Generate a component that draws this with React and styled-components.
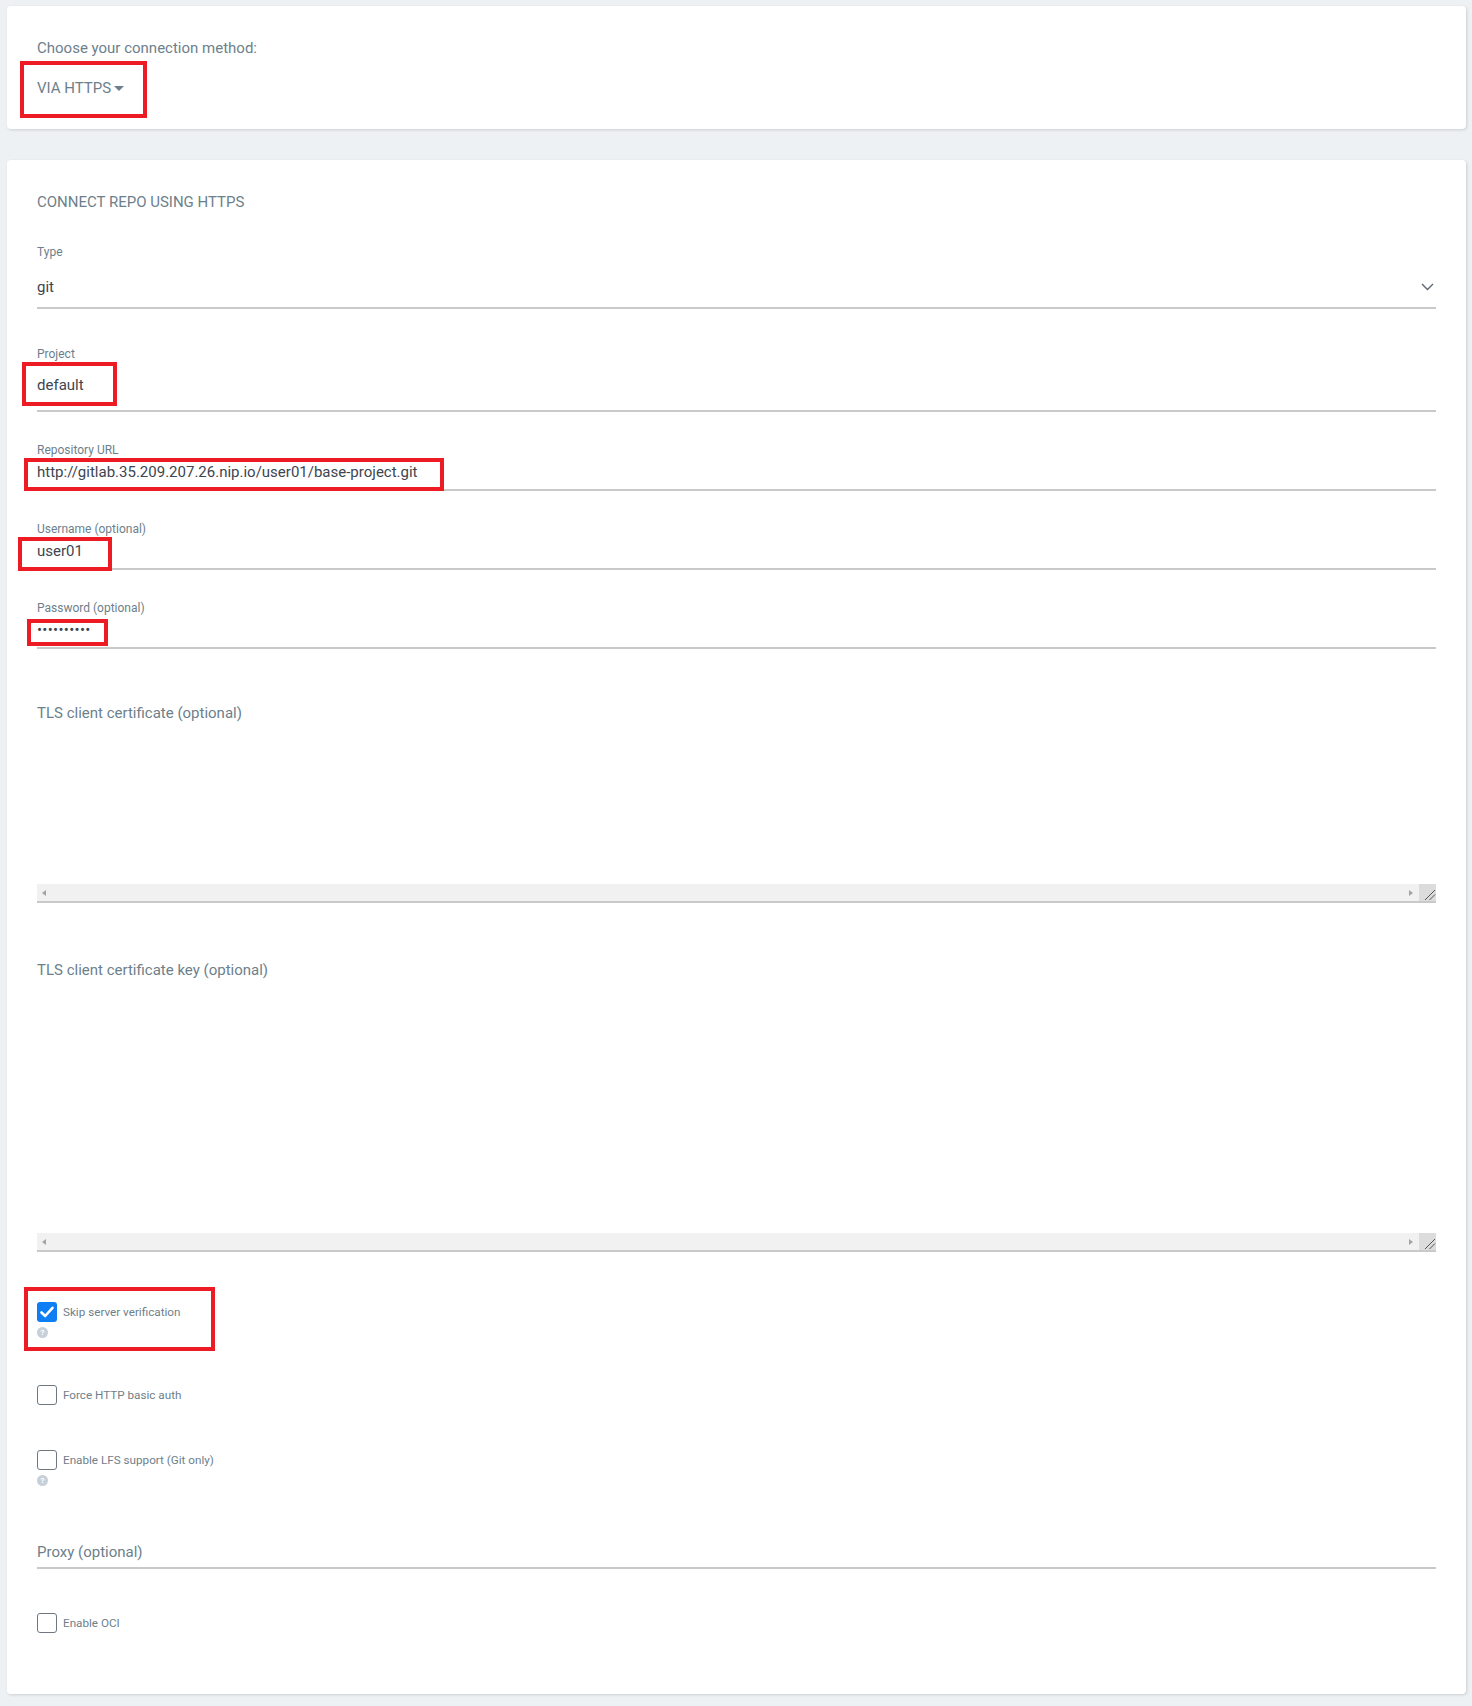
import React from "react";
import styled, { createGlobalStyle } from "styled-components";

const Global = createGlobalStyle`
  html, body { margin: 0; padding: 0; }
  body {
    background: #eef1f4;
    font-family: Roboto, "Liberation Sans", Arial, sans-serif;
    -webkit-font-smoothing: antialiased;
  }
`;

const Page = styled.div`
  padding: 6px 6px 12px 7px;
  display: flex;
  flex-direction: column;
  gap: 31px;
`;

const Card = styled.section`
  background: #fff;
  border-radius: 4px;
  box-shadow: 1px 1px 3px rgba(0, 0, 0, 0.14);
  padding: ${(p) => p.$pad};
  display: flex;
  flex-direction: column;
`;

const Muted = styled.div`
  font-size: 15px;
  line-height: 20px;
  color: #6d7f8b;
  margin-top: ${(p) => p.$mt || 0}px;
`;

const Heading = styled.h2`
  margin: 0;
  font-size: 15px;
  font-weight: 400;
  line-height: 20px;
  color: #6d7f8b;
  text-transform: uppercase;
`;

const Dropdown = styled.div`
  position: relative;
  align-self: flex-start;
  display: flex;
  align-items: center;
  gap: 3px;
  margin-top: 20px;
  font-size: 15px;
  line-height: 20px;
  color: #6d7f8b;
`;

const Caret = styled.span`
  width: 0;
  height: 0;
  border-left: 5px solid transparent;
  border-right: 5px solid transparent;
  border-top: 5px solid #6d7f8b;
  margin-top: 1px;
`;

const Highlight = styled.span`
  position: absolute;
  left: ${(p) => p.$l}px;
  top: ${(p) => p.$t}px;
  width: ${(p) => p.$w}px;
  height: ${(p) => p.$h}px;
  border: 4px solid #ed1c24;
  box-sizing: border-box;
  pointer-events: none;
`;

const Field = styled.div`
  position: relative;
  display: flex;
  flex-direction: column;
  margin-top: ${(p) => p.$mt}px;
  padding-bottom: ${(p) => p.$pb}px;
  border-bottom: 2px solid #c9c9c9;
`;

const FieldLabel = styled.label`
  font-size: 12px;
  line-height: 14px;
  color: #6d7f8b;
`;

const Value = styled.div`
  position: relative;
  display: flex;
  align-items: center;
  justify-content: space-between;
  margin-top: ${(p) => p.$mt}px;
  font-size: 15px;
  line-height: 20px;
  color: #3d4550;
  letter-spacing: ${(p) => (p.$dots ? "0.3px" : "0")};
`;

const Placeholder = styled.div`
  font-size: 15px;
  line-height: 20px;
  color: #6d7f8b;
`;

const TextArea = styled.div`
  display: flex;
  flex-direction: column;
  margin-top: ${(p) => p.$mt}px;
  border-bottom: 2px solid #c9c9c9;
`;

const AreaBody = styled.div`
  height: ${(p) => p.$h}px;
`;

const ScrollBar = styled.div`
  display: flex;
  align-items: center;
  height: 17px;
  background: #f1f1f1;
`;

const ArrowL = styled.span`
  width: 0;
  height: 0;
  margin-left: 5px;
  border-top: 3.5px solid transparent;
  border-bottom: 3.5px solid transparent;
  border-right: 4px solid #a3a3a3;
`;

const ArrowR = styled.span`
  width: 0;
  height: 0;
  margin-left: auto;
  margin-right: 6px;
  border-top: 3.5px solid transparent;
  border-bottom: 3.5px solid transparent;
  border-left: 4px solid #a3a3a3;
`;

const Resizer = styled.span`
  width: 17px;
  height: 17px;
  background: #dcdcdc;
  display: flex;
`;

const CheckRow = styled.div`
  position: relative;
  display: flex;
  flex-direction: column;
  align-items: flex-start;
  margin-top: ${(p) => p.$mt}px;
`;

const CheckLine = styled.label`
  display: flex;
  align-items: center;
  gap: 6px;
  font-size: 11.7px;
  line-height: 20px;
  color: #6d7f8b;
`;

const Box = styled.span`
  width: 20px;
  height: 20px;
  box-sizing: border-box;
  border-radius: 3px;
  border: ${(p) => (p.$on ? "none" : "1.5px solid #6f7780")};
  background: ${(p) => (p.$on ? "#0d7ef3" : "#fff")};
  display: flex;
  align-items: center;
  justify-content: center;
`;

const Help = styled.span`
  width: 11px;
  height: 11px;
  margin-top: 5px;
  border-radius: 50%;
  background: #c7d0d8;
  color: #fff;
  font-size: 8px;
  line-height: 11px;
  font-weight: 700;
  text-align: center;
`;

const ProxyField = styled.div`
  margin-top: ${(p) => p.$mt}px;
  padding-bottom: 5px;
  border-bottom: 2px solid #c9c9c9;
`;

function Checkbox({ on, label, help, mt, children }) {
  return (
    <CheckRow $mt={mt}>
      <CheckLine>
        <Box $on={on}>
          {on && (
            <svg width="14" height="12" viewBox="0 0 14 12">
              <path d="M1.5 6.5 L5.2 10 L12.5 1.8" fill="none" stroke="#fff" strokeWidth="2.6" strokeLinecap="round" strokeLinejoin="round" />
            </svg>
          )}
        </Box>
        {label}
      </CheckLine>
      {help && <Help>?</Help>}
      {children}
    </CheckRow>
  );
}

function Scroll() {
  return (
    <ScrollBar>
      <ArrowL />
      <ArrowR />
      <Resizer>
        <svg width="17" height="17" viewBox="0 0 17 17">
          <path d="M6 16 L16 6 M10.5 16 L16 10.5" stroke="#555" strokeWidth="1" />
        </svg>
      </Resizer>
    </ScrollBar>
  );
}

export default function App() {
  return (
    <>
      <Global />
      <Page>
        <Card $pad="32px 30px 31px 30px">
          <Muted>Choose your connection method:</Muted>
          <Dropdown>
            VIA HTTPS <Caret />
            <Highlight $l={-17} $t={-17} $w={127} $h={57} />
          </Dropdown>
        </Card>

        <Card $pad="32px 30px 61px 30px">
          <Heading>Connect repo using HTTPS</Heading>

          <Field $mt={33} $pb={10}>
            <FieldLabel>Type</FieldLabel>
            <Value $mt={18}>
              git
              <svg width="13" height="8" viewBox="0 0 13 8" style={{ marginRight: 2 }}>
                <polyline points="1,1 6.5,6.5 12,1" fill="none" stroke="#5d6670" strokeWidth="1.4" />
              </svg>
            </Value>
          </Field>

          <Field $mt={38} $pb={15}>
            <FieldLabel>Project</FieldLabel>
            <Value $mt={14}>
              default
              <Highlight $l={-15} $t={-13} $w={95} $h={44} />
            </Value>
          </Field>

          <Field $mt={31} $pb={7}>
            <FieldLabel>Repository URL</FieldLabel>
            <Value $mt={5}>
              http://gitlab.35.209.207.26.nip.io/user01/base-project.git
              <Highlight $l={-13} $t={-4} $w={420} $h={33} />
            </Value>
          </Field>

          <Field $mt={31} $pb={7}>
            <FieldLabel>Username (optional)</FieldLabel>
            <Value $mt={5}>
              user01
              <Highlight $l={-19} $t={-4} $w={94} $h={34} />
            </Value>
          </Field>

          <Field $mt={31} $pb={7}>
            <FieldLabel>Password (optional)</FieldLabel>
            <Value $mt={5} $dots>
              ••••••••••
              <Highlight $l={-10} $t={-1} $w={81} $h={27} />
            </Value>
          </Field>

          <TextArea $mt={54}>
            <Placeholder>TLS client certificate (optional)</Placeholder>
            <AreaBody $h={161} />
            <Scroll />
          </TextArea>

          <TextArea $mt={57}>
            <Placeholder>TLS client certificate key (optional)</Placeholder>
            <AreaBody $h={253} />
            <Scroll />
          </TextArea>

          <Checkbox on label="Skip server verification" help mt={50}>
            <Highlight $l={-13} $t={-15} $w={191} $h={64} />
          </Checkbox>
          <Checkbox label="Force HTTP basic auth" mt={47} />
          <Checkbox label="Enable LFS support (Git only)" help mt={45} />

          <ProxyField $mt={56}>
            <Placeholder>Proxy (optional)</Placeholder>
          </ProxyField>

          <Checkbox label="Enable OCI" mt={44} />
        </Card>
      </Page>
    </>
  );
}
